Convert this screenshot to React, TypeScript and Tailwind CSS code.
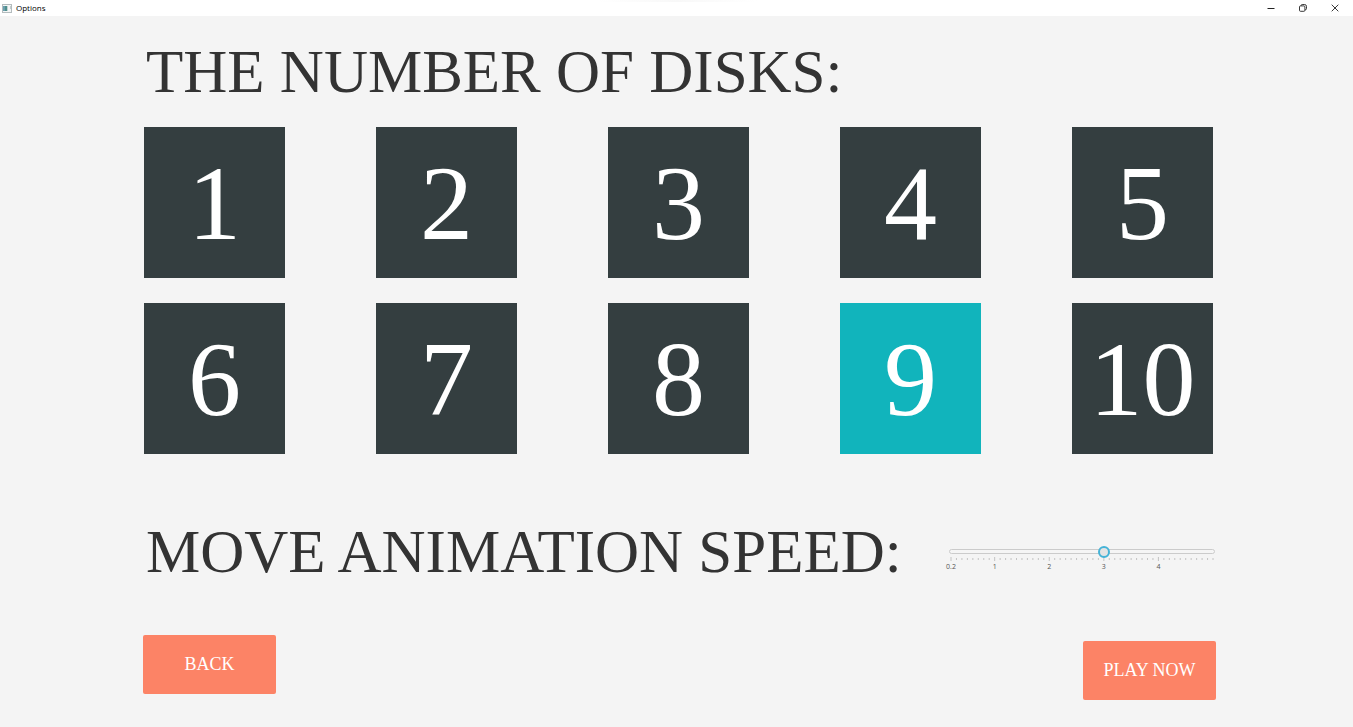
import { useState } from "react";

const DISKS = [1, 2, 3, 4, 5, 6, 7, 8, 9, 10];
const MIN_SPEED = 0.2;
const MAX_SPEED = 5;
const SPEED_LABELS = [0.2, 1, 2, 3, 4];
const TICKS = Array.from({ length: 49 }, (_, i) => i);

function TitleBar() {
  return (
    <header className="relative flex h-4 items-center justify-between bg-white pr-0.5 font-['Open_Sans','Noto_Sans',sans-serif]">
      <div className="flex h-[15px] items-center gap-1 pl-0.5">
        <svg width="10" height="9" viewBox="0 0 10 9" aria-hidden="true">
          <rect x="0.5" y="0.5" width="9" height="8" fill="#f4f6f6" stroke="#b4bcbe" />
          <rect x="1" y="2" width="4" height="5" fill="#4f8f8c" />
          <rect x="1" y="2" width="2" height="5" fill="#6b9fae" />
          <rect x="5" y="2" width="1" height="5" fill="#c3d3d3" />
          <rect x="8" y="2" width="1" height="3" fill="#c3cccc" />
        </svg>
        <span className="text-[8px] leading-4 text-black">Options</span>
      </div>
      <div className="absolute left-1/2 top-0 h-0.5 w-40 -translate-x-1/2 bg-linear-to-r from-white via-[#f8f8f8] to-white" />
      <div className="flex h-4 items-start text-[#222222]">
        <button type="button" aria-label="Minimize" className="flex h-[15px] w-8 items-center justify-center">
          <svg width="8" height="8" viewBox="0 0 8 8" fill="none" stroke="currentColor">
            <path d="M0.5 4.5h7" />
          </svg>
        </button>
        <button type="button" aria-label="Restore" className="flex h-[15px] w-8 items-center justify-center">
          <svg width="8" height="8" viewBox="0 0 8 8" fill="none" stroke="currentColor" strokeWidth="0.9">
            <rect x="0.5" y="1.9" width="5.4" height="5.4" rx="1" />
            <path d="M2 1.7C2 1 2.5 0.5 3.2 0.5H5.5A2 2 0 0 1 7.5 2.5V4.6C7.5 5.3 7 5.9 6.2 5.9" />
          </svg>
        </button>
        <button type="button" aria-label="Close" className="flex h-[15px] w-8 items-center justify-center">
          <svg width="8" height="8" viewBox="0 0 8 8" fill="none" stroke="currentColor" strokeWidth="0.9">
            <path d="M0.7 0.7l6.6 6.6M7.3 0.7L0.7 7.3" />
          </svg>
        </button>
      </div>
    </header>
  );
}

function SpeedSlider() {
  const [speed, setSpeed] = useState(3);
  return (
    <div className="w-[274px] pt-4">
      <div className="relative flex h-3 items-center px-1">
        <div className="h-[5px] w-full rounded-full border border-[#cbcbcb] bg-[#f5f5f5]" />
        <input
          id="speed"
          type="range"
          min={MIN_SPEED}
          max={MAX_SPEED}
          step={0.1}
          value={speed}
          onChange={(e) => setSpeed(Number(e.target.value))}
          className="absolute inset-0 m-0 h-3 w-full cursor-pointer appearance-none bg-transparent [&::-webkit-slider-thumb]:h-3 [&::-webkit-slider-thumb]:w-3 [&::-webkit-slider-thumb]:appearance-none [&::-webkit-slider-thumb]:rounded-full [&::-webkit-slider-thumb]:border-2 [&::-webkit-slider-thumb]:border-[#45b3d7] [&::-webkit-slider-thumb]:bg-[#e4e4e4]"
        />
      </div>
      <div className="px-1.5">
        <svg viewBox="0 0 262 5" className="block h-[5px] w-full overflow-visible" aria-hidden="true">
          {TICKS.map((i) => {
            const x = (i * 262) / 48;
            const major = i !== 48 && (i === 0 || i % 10 === 8);
            return (
              <path key={i} d={`M${x} ${major ? -1 : 0}V${major ? 3 : 2}`} stroke="#bdbdbd" strokeWidth="0.9" />
            );
          })}
        </svg>
        <div className="relative h-3 font-['Open_Sans','Noto_Sans',sans-serif] text-[7px] leading-[8px] text-[#555555]">
          {SPEED_LABELS.map((v) => (
            <span
              key={v}
              className="absolute top-0 -translate-x-1/2"
              style={{ left: `${((v - MIN_SPEED) / (MAX_SPEED - MIN_SPEED)) * 100}%` }}
            >
              {v}
            </span>
          ))}
        </div>
      </div>
    </div>
  );
}

export default function App() {
  const [disks, setDisks] = useState(9);
  return (
    <div className="flex min-h-screen flex-col bg-[#f4f4f4] font-['Liberation_Serif',serif]">
      <TitleBar />
      <main className="flex flex-col pl-36 pr-[140px] pt-6">
        <h1 className="pl-0.5 text-[61px] leading-16 text-[#333333]">THE NUMBER OF DISKS:</h1>
        <div className="mt-[23px] grid grid-cols-[repeat(5,141px)] justify-between gap-y-[25px]">
          {DISKS.map((n) => (
            <button
              key={n}
              type="button"
              aria-pressed={n === disks}
              onClick={() => setDisks(n)}
              className={`h-[151px] pt-0.5 text-[106px] leading-none text-white ${
                n === disks ? "bg-[#11b4bc]" : "bg-[#343e40]"
              }`}
            >
              {n}
            </button>
          ))}
        </div>
        <div className="-mr-1.5 mt-[66px] flex items-center justify-between">
          <label htmlFor="speed" className="whitespace-nowrap pl-0.5 text-[61px] leading-16 text-[#333333]">
            MOVE ANIMATION SPEED:
          </label>
          <SpeedSlider />
        </div>
        <div className="-ml-px -mr-[3px] mt-[51px] flex items-start justify-between text-[18px] text-white">
          <button type="button" className="h-[59px] w-[133px] rounded-xs bg-[#fc8366]">
            BACK
          </button>
          <button type="button" className="mt-1.5 h-[59px] w-[133px] rounded-xs bg-[#fc8366]">
            PLAY NOW
          </button>
        </div>
      </main>
    </div>
  );
}
